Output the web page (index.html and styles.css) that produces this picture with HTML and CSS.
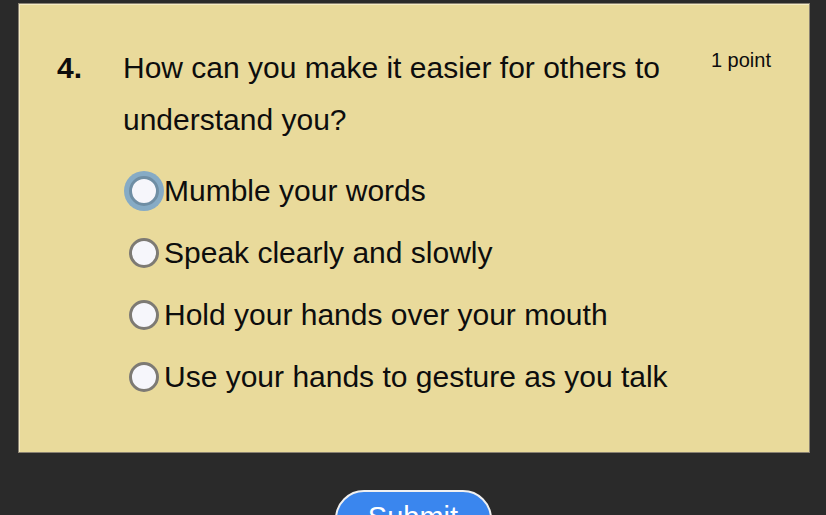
FILE: index.html
```html
<!DOCTYPE html>
<html>
<head>
<meta charset="utf-8">
<link rel="stylesheet" href="styles.css">
</head>
<body>
<div class="page">
  <div class="card">
    <div class="question">
      <div class="num">4.</div>
      <div class="qtext">How can you make it easier for others to understand you?</div>
      <div class="points">1 point</div>
    </div>
    <div class="options">
      <label class="option"><span class="radio focused"></span><span class="label">Mumble your words</span></label>
      <label class="option"><span class="radio"></span><span class="label">Speak clearly and slowly</span></label>
      <label class="option"><span class="radio"></span><span class="label">Hold your hands over your mouth</span></label>
      <label class="option"><span class="radio"></span><span class="label">Use your hands to gesture as you talk</span></label>
    </div>
  </div>
  <div class="actions">
    <button class="submit">Submit</button>
  </div>
</div>
</body>
</html>
```

FILE: styles.css
```css
html, body {
  margin: 0;
  padding: 0;
  background: #2a2a2a;
  height: 100%;
  overflow: hidden;
}
body {
  font-family: "Liberation Sans", Arial, sans-serif;
  color: #0d0d0d;
}
.page {
  padding: 3px 16px 0 18px;
}
.card {
  width: 792px;
  height: 450px;
  box-sizing: border-box;
  background: #e9da9b;
  border: 1px solid #8a8272;
  box-shadow: inset 1px 1px 0 #f5ecc4;
  padding: 38px 38px 0 38px;
}
.question {
  display: flex;
  align-items: flex-start;
}
.num {
  width: 66px;
  flex: none;
  font-size: 30px;
  font-weight: bold;
  line-height: 52px;
}
.qtext {
  width: 570px;
  flex: none;
  font-size: 30px;
  line-height: 52px;
}
.points {
  margin-left: auto;
  font-size: 20px;
  line-height: 32px;
  margin-top: 2px;
}
.options {
  margin-top: 14px;
  padding-left: 72px;
  display: flex;
  flex-direction: column;
}
.option {
  display: flex;
  align-items: center;
  height: 62px;
}
.radio {
  width: 24px;
  height: 24px;
  border-radius: 50%;
  border: 3px solid #7d7a74;
  background: #f6f6fb;
  flex: none;
}
.radio.focused {
  border-color: #6f8ea4;
  box-shadow: 0 0 0 5px #86abc5;
}
.label {
  margin-left: 5px;
  font-size: 30px;
}
.actions {
  display: flex;
  justify-content: center;
  padding-top: 37px;
  padding-right: 2px;
}
.submit {
  width: 157px;
  height: 58px;
  border-radius: 29px;
  border: 2px solid #f0f0f0;
  background: #3a86ee;
  color: #fff;
  font-family: "Liberation Sans", Arial, sans-serif;
  font-size: 29px;
  padding: 9px 0 0 0;
  display: flex;
  justify-content: center;
  align-items: flex-start;
}
```
